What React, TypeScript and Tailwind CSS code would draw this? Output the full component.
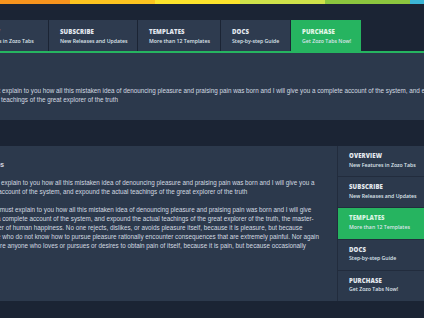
const topTabs = [
  { title: "Overview", sub: "New Features in Zozo Tabs", w: "w-[92px]" },
  { title: "Subscribe", sub: "New Releases and Updates", w: "w-[88px]" },
  { title: "Templates", sub: "More than 12 Templates", w: "w-[82px]" },
  { title: "Docs", sub: "Step-by-step Guide", w: "w-[69px]" },
  { title: "Purchase", sub: "Get Zozo Tabs Now!", w: "w-[70px]", active: true },
];

const sideTabs = [
  { title: "Overview", sub: "New Features in Zozo Tabs" },
  { title: "Subscribe", sub: "New Releases and Updates" },
  { title: "Templates", sub: "More than 12 Templates", active: true },
  { title: "Docs", sub: "Step-by-step Guide" },
  { title: "Purchase", sub: "Get Zozo Tabs Now!" },
];

const stripes = ["bg-[#f7941d] w-[70px]", "bg-[#fdc41f] w-[85px]", "bg-[#fde42c] w-[85px]", "bg-[#cfe24a] w-[85px]", "bg-[#8cc63e] w-[85px]", "bg-[#3cb6d6] flex-1"];

const firstPanel = [
  "But I must explain to you how all this mistaken idea of denouncing pleasure and praising pain was born and I will give you a complete account of the system, and expound",
  "the actual teachings of the great explorer of the truth",
];

const introLines = [
  "But I must explain to you how all this mistaken idea of denouncing pleasure and praising pain was born and I will give you a",
  "complete account of the system, and expound the actual teachings of the great explorer of the truth",
];

const bodyLines = [
  "But I must explain to you how all this mistaken idea of denouncing pleasure and praising pain was born and I will give",
  "you a complete account of the system, and expound the actual teachings of the great explorer of the truth, the master-",
  "builder of human happiness. No one rejects, dislikes, or avoids pleasure itself, because it is pleasure, but because",
  "those who do not know how to pursue pleasure rationally encounter consequences that are extremely painful. Nor again",
  "is there anyone who loves or pursues or desires to obtain pain of itself, because it is pain, but because occasionally",
];

function Lines({ lines }: { lines: string[] }) {
  return (
    <div className="flex flex-col">
      {lines.map((line) => (
        <span key={line} className="whitespace-nowrap leading-[9px]">
          {line}
        </span>
      ))}
    </div>
  );
}

export default function App() {
  return (
    <div className="h-[318px] w-[424px] overflow-hidden bg-[#1b2434] font-['Liberation_Sans',Arial,sans-serif] text-[6.3px] text-[#d3d9e1]">
      <div className="flex h-[4px]">
        {stripes.map((s) => (
          <div key={s} className={s} />
        ))}
      </div>

      <div className="ml-[-44px] w-[520px]">
        {/* horizontal tabs */}
        <div className="mt-[16px] flex gap-px">
          {topTabs.map((tab) => (
            <div
              key={tab.title}
              className={`${tab.w} h-[31px] shrink-0 pl-[11px] pt-[9px] font-['Open_Sans',sans-serif] ${
                tab.active ? "bg-[#26b460]" : "bg-[#2e3b4f]"
              }`}
            >
              <div className={`text-[6px] font-extrabold uppercase leading-[7px] tracking-[0.02em] ${tab.active ? "text-[#e3f7e9]" : "text-[#e4e9ef]"}`}>
                {tab.title}
              </div>
              <div className="mt-[2px] whitespace-nowrap text-[5.2px] font-semibold leading-[7px] text-[#dfe5ec]">{tab.sub}</div>
            </div>
          ))}
        </div>
        <div className="h-[2px] bg-[#26b460]" />

        <div className="h-[67px] bg-[#2c394c] pl-[16px] pt-[33px]">
          <Lines lines={firstPanel} />
        </div>

        <div className="mt-[26px] flex h-[155px]">
          <div className="w-[381px] shrink-0 bg-[#2c394c] pl-[15px] pt-[14px]">
            <div className="whitespace-nowrap text-[6.8px] font-bold leading-[9px]">Zozo Tabs</div>
            <div className="mt-[9px]">
              <Lines lines={introLines} />
            </div>
            <div className="mt-[9px] pl-[14px]">
              <Lines lines={bodyLines} />
            </div>
          </div>
          <div className="flex w-[87px] shrink-0 flex-col gap-px border-l border-[#222c3d] bg-[#222c3d] font-['Open_Sans',sans-serif]">
            {sideTabs.map((tab) => (
              <div
                key={tab.title}
                className={`flex-1 pl-[11px] pt-[7px] ${tab.active ? "bg-[#26b460]" : "bg-[#2c394c]"}`}
              >
                <div className={`text-[6px] font-extrabold uppercase leading-[7px] tracking-[0.02em] ${tab.active ? "text-[#d8f5e2]" : "text-[#e4e9ef]"}`}>
                  {tab.title}
                </div>
                <div className="mt-[1.5px] whitespace-nowrap text-[5.2px] font-semibold leading-[7px] text-[#dfe5ec]">{tab.sub}</div>
              </div>
            ))}
          </div>
        </div>
      </div>
    </div>
  );
}
